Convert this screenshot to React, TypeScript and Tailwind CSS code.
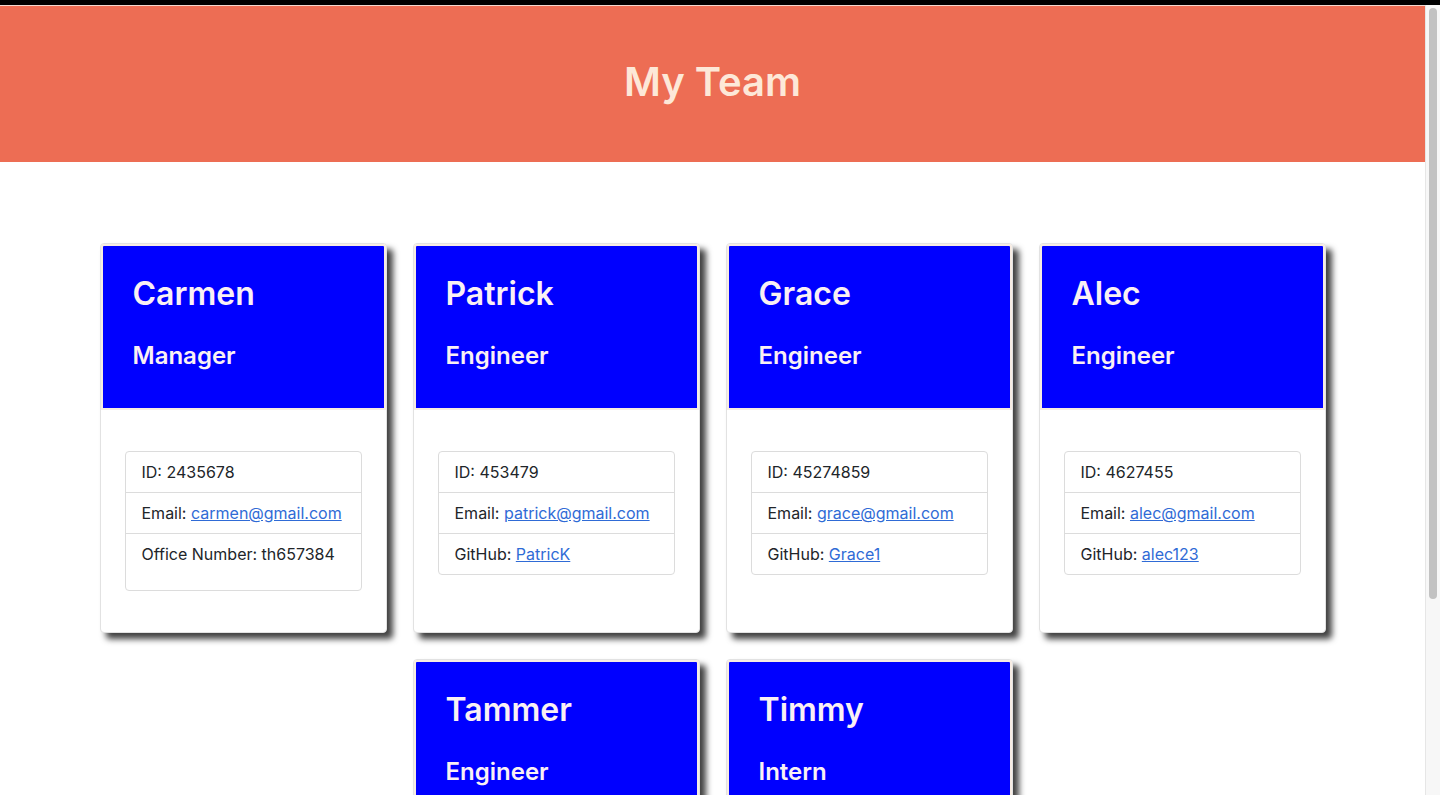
import React from "react";

type Member = {
  name: string;
  role: string;
  id: string;
  email: string;
  extra: { label: string; value: string; link?: boolean };
};

const team: Member[] = [
  { name: "Carmen", role: "Manager", id: "2435678", email: "carmen@gmail.com", extra: { label: "Office Number", value: "th657384" } },
  { name: "Patrick", role: "Engineer", id: "453479", email: "patrick@gmail.com", extra: { label: "GitHub", value: "PatricK", link: true } },
  { name: "Grace", role: "Engineer", id: "45274859", email: "grace@gmail.com", extra: { label: "GitHub", value: "Grace1", link: true } },
  { name: "Alec", role: "Engineer", id: "4627455", email: "alec@gmail.com", extra: { label: "GitHub", value: "alec123", link: true } },
  { name: "Tammer", role: "Engineer", id: "8812345", email: "tammer@gmail.com", extra: { label: "GitHub", value: "tammer9", link: true } },
  { name: "Timmy", role: "Intern", id: "1123581", email: "timmy@gmail.com", extra: { label: "School", value: "UCLA" } },
];

function Card({ m }: { m: Member }) {
  return (
    <div className="m-[13px] w-[287px] bg-white border border-[#e2e2e2] rounded-[4px] shadow-[6px_6px_6px_rgba(0,0,0,0.75)] flex flex-col">
      <div className="bg-[#0000ff] border-2 border-[#f7ece3] rounded-t-[3px] px-[30px] pt-[29px] pb-[38px] text-[#faf0f4]">
        <h2 className="text-[32px] leading-[38px] font-semibold">{m.name}</h2>
        <h3 className="mt-[28px] text-[24px] leading-[29px] font-semibold">{m.role}</h3>
      </div>
      <div className="pt-[41px] pb-[41px] px-[24px]">
        <ul className="border border-[#dcdcdc] rounded-[4px] text-[16px] leading-[24px] text-[#212529]">
          <li className="px-4 py-2 border-b border-[#dcdcdc]">ID: {m.id}</li>
          <li className="px-4 py-2 border-b border-[#dcdcdc]">
            Email: <a href="#" className="text-[#2f6bd6] underline">{m.email}</a>
          </li>
          <li className={m.extra.link ? "px-4 py-2" : "px-4 pt-2 pb-6"}>
            {m.extra.label}:{" "}
            {m.extra.link ? <a href="#" className="text-[#2f6bd6] underline">{m.extra.value}</a> : m.extra.value}
          </li>
        </ul>
      </div>
    </div>
  );
}

export default function App() {
  return (
    <div className="h-[795px] overflow-hidden flex flex-col bg-white font-['Inter',sans-serif]">
      <div className="h-[5px] bg-black shrink-0" />
      <div className="flex-1 flex min-h-0">
        <div className="flex-1 min-w-0 overflow-hidden">
          <header className="h-[157px] bg-[#ed6d54] border-t border-[#f3d8cf] flex items-center justify-center">
            <h1 className="text-[40px] leading-[48px] font-semibold text-[#fde8d8] -mt-[4px]">My Team</h1>
          </header>
          <main className="pt-[68px] flex flex-wrap justify-center px-[86px]">
            {team.map((m) => (
              <Card key={m.name} m={m} />
            ))}
          </main>
        </div>
        {/* scrollbar */}
        <div className="w-[15px] shrink-0 bg-[#f7f7f7] border-l border-[#e6e6e6] pt-[3px] px-[3px]">
          <div className="h-[591px] w-full rounded-full bg-[#c2c2c2]" />
        </div>
      </div>
    </div>
  );
}
